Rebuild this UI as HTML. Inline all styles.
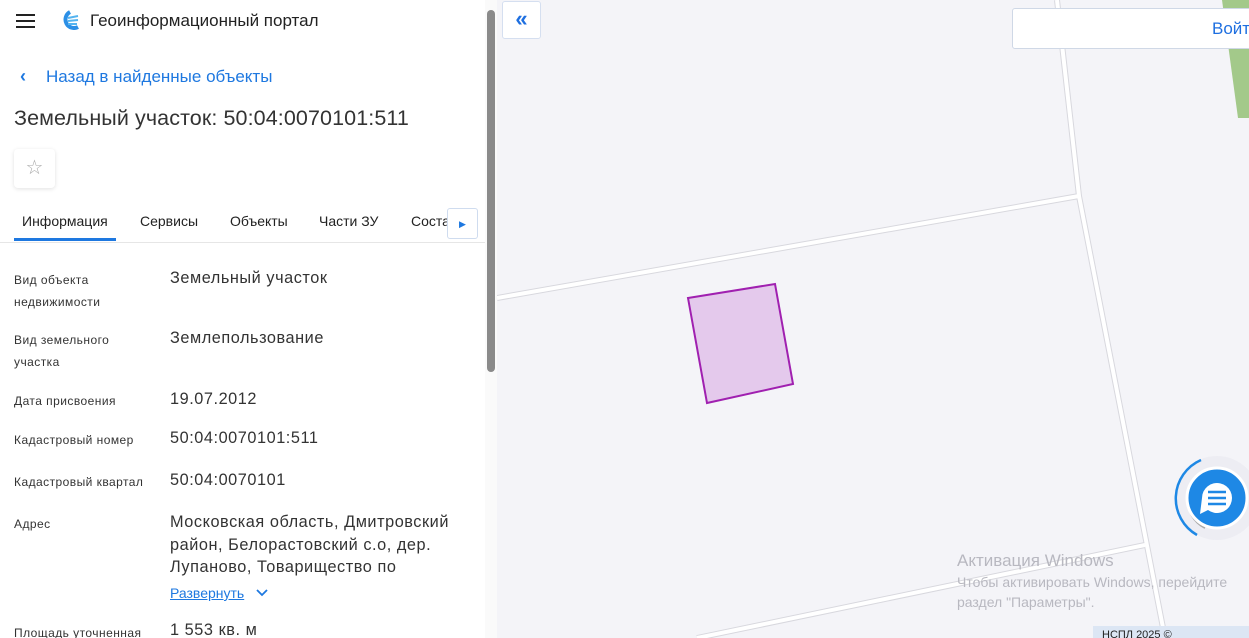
<!DOCTYPE html>
<html><head><meta charset="utf-8"><style>
*{margin:0;padding:0;box-sizing:border-box}
body{width:1249px;height:638px;overflow:hidden;font-family:"Liberation Sans",sans-serif;background:#f4f4f8;position:relative}
.side{position:absolute;left:0;top:0;width:497px;height:638px;background:#fff;overflow:hidden}
.t{position:absolute;white-space:nowrap}
.lab{position:absolute;left:14px;font-size:12px;letter-spacing:0.45px;color:#333;line-height:22px}
.val{position:absolute;left:170px;font-size:16.3px;letter-spacing:0.55px;color:#333;line-height:22.5px;white-space:nowrap}
</style></head><body>
<svg style="position:absolute;left:497px;top:0" width="752" height="638">
<rect width="752" height="638" fill="#f4f4f8"/>
<polygon points="725,0 752,0 752,118 741,118" fill="#a3c98a"/>
<g stroke="#d8d8de" stroke-width="6" fill="none">
<path d="M560,0 L582,196 L668,638"/><path d="M0,298 L582,196"/><path d="M200,638 L648,545"/>
</g>
<g stroke="#fff" stroke-width="4" fill="none">
<path d="M560,0 L582,196 L668,638"/><path d="M0,298 L582,196"/><path d="M200,638 L648,545"/>
</g>
<polygon points="191,298 278,284 296,384 210,403" fill="#e4c9ec" stroke="#a020b0" stroke-width="2"/>
<text x="460" y="566" font-size="17" fill="#b8b8c0" font-family="Liberation Sans">Активация Windows</text>
<text x="460" y="587" font-size="14" fill="#b8b8c0" font-family="Liberation Sans">Чтобы активировать Windows, перейдите</text>
<text x="460" y="607" font-size="14" fill="#b8b8c0" font-family="Liberation Sans">раздел "Параметры".</text>
<rect x="596" y="626" width="160" height="14" fill="#dce6f4"/>
<text x="605" y="638" font-size="11" fill="#222" font-family="Liberation Sans">НСПЛ 2025 ©</text>
<circle cx="720" cy="498" r="42" fill="#e8e8f0" opacity="0.6"/>
<path d="M704,460 A42,42 0 0 0 700,535" stroke="#1e88e5" stroke-width="2.5" fill="none"/>
<path d="M710,470 A32,32 0 0 0 708,528" stroke="#aaa" stroke-width="2" fill="none"/>
<circle cx="720" cy="498" r="30" fill="#1e88e5" stroke="#fff" stroke-width="3"/>
<path d="M705,498 a15,15 0 1 1 6,12 l-8,4 z" fill="#fff"/>
<g stroke="#1e88e5" stroke-width="2.5"><line x1="711" y1="492" x2="729" y2="492"/><line x1="711" y1="498" x2="729" y2="498"/><line x1="711" y1="504" x2="729" y2="504"/></g>
</svg>
<div style="position:absolute;left:502px;top:1px;width:39px;height:38px;background:#fff;border:1px solid #d5dff0;border-radius:3px;color:#1e6fe0;font-size:22px;font-weight:bold;text-align:center;line-height:34px">«</div>
<div style="position:absolute;left:1012px;top:8px;width:250px;height:41px;background:#fff;border:1px solid #cfd8e6;border-radius:3px"><span class="t" style="left:199px;top:10px;font-size:17px;color:#1e6fe0">Войти</span></div>

<div class="side">
<div style="position:absolute;left:16px;top:14px;width:19px;height:2px;background:#222;box-shadow:0 6px 0 #222,0 12px 0 #222"></div>
<svg style="position:absolute;left:60px;top:10px" width="20" height="20"><path d="M10,2 a8,8 0 1 0 8,15" stroke="#2b8fe6" stroke-width="4" fill="none"/><g stroke="#54b4f0" stroke-width="2"><line x1="8" y1="8" x2="18" y2="6"/><line x1="8" y1="11" x2="18" y2="10"/><line x1="8" y1="14" x2="17" y2="14"/></g></svg>
<span class="t" style="left:90px;top:11px;font-size:17px;color:#222">Геоинформационный портал</span>
<span class="t" style="left:20px;top:66px;font-size:18px;color:#1e78e0;font-weight:bold">‹</span>
<span class="t" style="left:46px;top:67px;font-size:17px;color:#1e78e0">Назад в найденные объекты</span>
<span class="t" style="left:14px;top:106px;font-size:21.5px;letter-spacing:0.1px;color:#333">Земельный участок: 50:04:0070101:511</span>
<div style="position:absolute;left:14px;top:149px;width:41px;height:39px;border-radius:4px;box-shadow:0 1px 4px rgba(0,0,0,.12);color:#aaa;font-size:20px;text-align:center;line-height:38px">☆</div>
<span class="t" style="left:22px;top:213px;font-size:14px;color:#222">Информация</span>
<span class="t" style="left:140px;top:213px;font-size:14px;color:#222">Сервисы</span>
<span class="t" style="left:230px;top:213px;font-size:14px;color:#222">Объекты</span>
<span class="t" style="left:319px;top:213px;font-size:14px;color:#222">Части ЗУ</span>
<span class="t" style="left:411px;top:213px;font-size:14px;color:#222">Состав</span>
<div style="position:absolute;left:14px;top:238px;width:102px;height:3px;background:#1e78e0"></div>
<div style="position:absolute;left:0;top:242px;width:485px;height:1px;background:#e6e6e6"></div>
<div style="position:absolute;left:447px;top:208px;width:31px;height:31px;background:#fff;border:1px solid #cfdcef;border-radius:3px;color:#1e78e0;font-size:9px;text-align:center;line-height:30px">▶</div>
<div class="lab" style="top:269px">Вид объекта<br>недвижимости</div><div class="val" style="top:267px">Земельный участок</div>
<div class="lab" style="top:329px">Вид земельного<br>участка</div><div class="val" style="top:327px">Землепользование</div>
<div class="lab" style="top:390px">Дата присвоения</div><div class="val" style="top:388px">19.07.2012</div>
<div class="lab" style="top:429px">Кадастровый номер</div><div class="val" style="top:427px">50:04:0070101:511</div>
<div class="lab" style="top:471px">Кадастровый квартал</div><div class="val" style="top:469px">50:04:0070101</div>
<div class="lab" style="top:513px">Адрес</div><div class="val" style="top:511px">Московская область, Дмитровский<br>район, Белорастовский с.о, дер.<br>Лупаново, Товарищество по</div>
<span class="t" style="left:170px;top:585px;font-size:14px;color:#1e78e0;text-decoration:underline">Развернуть</span>
<svg style="position:absolute;left:256px;top:589px" width="12" height="8"><path d="M1,1 L6,6 L11,1" stroke="#1e78e0" stroke-width="1.8" fill="none"/></svg>
<div class="lab" style="top:622px">Площадь уточненная</div><div class="val" style="top:619px">1 553 кв. м</div>
<div style="position:absolute;left:485px;top:0;width:12px;height:638px;background:#fafafa"></div>
<div style="position:absolute;left:487px;top:10px;width:8px;height:362px;background:#8a8a8a;border-radius:4px"></div>
</div>
</body></html>
